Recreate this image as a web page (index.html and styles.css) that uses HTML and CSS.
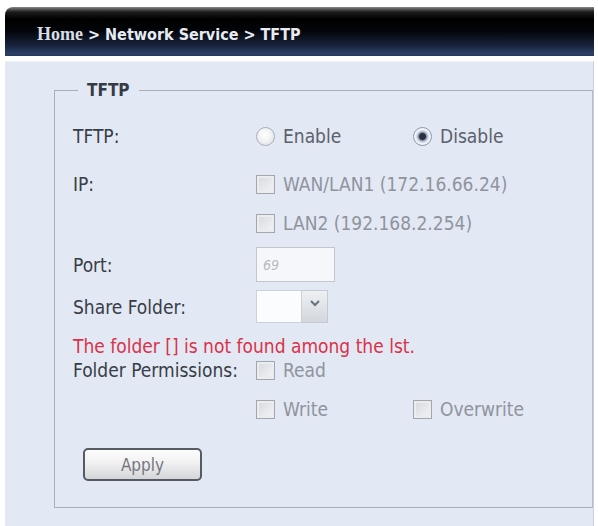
FILE: index.html
```html
<!DOCTYPE html>
<html>
<head>
<meta charset="utf-8">
<link rel="stylesheet" href="styles.css">
</head>
<body>
<div class="page">
  <div class="crumb"><span class="home">Home</span><span class="path">&nbsp;&gt; Network Service &gt; TFTP</span></div>
  <div class="panel">
    <fieldset class="box">
      <legend class="legend">TFTP</legend>
      <div class="row r-tftp">
        <span class="label">TFTP:</span>
        <span class="opt"><span class="radio"></span><span class="txt-mid">Enable</span></span>
        <span class="opt"><span class="radio on"></span><span class="txt-mid">Disable</span></span>
      </div>
      <div class="row r-ip">
        <span class="label">IP:</span>
        <span class="opt"><span class="check"></span><span class="txt-dis">WAN/LAN1 (172.16.66.24)</span></span>
      </div>
      <div class="row r-lan2">
        <span class="label"></span>
        <span class="opt"><span class="check"></span><span class="txt-dis">LAN2 (192.168.2.254)</span></span>
      </div>
      <div class="row r-port">
        <span class="label">Port:</span>
        <span class="field">69</span>
      </div>
      <div class="row r-share">
        <span class="label">Share Folder:</span>
        <span class="select"><span class="select-box"></span><span class="select-arrow"><svg width="10" height="7" viewBox="0 0 10 7"><path d="M1 1 L5 5 L9 1" fill="none" stroke="#6a717c" stroke-width="2"/></svg></span></span>
      </div>
      <div class="row r-err">
        <span class="error">The folder [] is not found among the lst.</span>
      </div>
      <div class="row r-perm">
        <span class="label">Folder Permissions:</span>
        <span class="opt"><span class="check"></span><span class="txt-dis">Read</span></span>
      </div>
      <div class="row r-write">
        <span class="label"></span>
        <span class="opt"><span class="check"></span><span class="txt-dis">Write</span></span>
        <span class="opt"><span class="check"></span><span class="txt-dis">Overwrite</span></span>
      </div>
      <div class="actions">
        <button class="btn" type="button">Apply</button>
      </div>
    </fieldset>
  </div>
</div>
</body>
</html>
```
FILE: styles.css
```css
html, body {
  margin: 0;
  padding: 0;
  background: #ffffff;
}
body {
  font-family: "DejaVu Sans Condensed", "DejaVu Sans", sans-serif;
  overflow: hidden;
}
.page {
  padding: 7px 4px 0 5px;
}
.crumb {
  height: 49px;
  box-sizing: border-box;
  border-radius: 8px 0 0 0;
  background: linear-gradient(#8a8a8a 0px, #5a5a5a 2px, #1c1c1c 5px, #000000 12px, #03050a 24px, #17223a 38px, #2e4169 47px, #24355a 49px);
  display: flex;
  align-items: center;
  padding: 5px 0 0 32px;
  color: #e6eaf0;
}
.home {
  font-family: "Liberation Serif", "DejaVu Serif", serif;
  font-weight: bold;
  font-size: 18px;
  color: #d9dee6;
}
.path {
  font-family: "DejaVu Sans Condensed", "DejaVu Sans", sans-serif;
  font-weight: bold;
  font-size: 16px;
  color: #e8ecf2;
}
.panel {
  margin-top: 5px;
  background: #e2e8f4;
  border-top: 1px solid #eef1f7;
  border-right: 1px solid #c9d0db;
  padding: 18px 0 30px 49px;
}
.box {
  margin: 0;
  border: 1px solid #a7afbb;
  border-right-color: #b6bdc8;
  padding: 24px 0 26px 18px;
  min-width: 0;
}
.legend {
  font-family: "DejaVu Sans Condensed", "DejaVu Sans", sans-serif;
  font-weight: bold;
  font-size: 17px;
  line-height: 20px;
  color: #363b43;
  padding: 0 9px;
  margin-left: 5px;
}
.row {
  display: flex;
  align-items: center;
  height: 24px;
  font-size: 19px;
  color: #383d45;
  white-space: nowrap;
}
.label {
  width: 183px;
  flex: none;
}
.opt {
  width: 157px;
  flex: none;
  display: flex;
  align-items: center;
  gap: 8px;
}
.r-ip { margin-top: 24px; }
.r-lan2 { margin-top: 15px; }
.r-port { margin-top: 12px; height: 35px; }
.r-share { margin-top: 8px; height: 33px; }
.r-err { margin-top: 11px; }
.r-perm { margin-top: 0; }
.r-write { margin-top: 15px; }
.txt-mid { color: #5c616a; }
.txt-dis { color: #8f949c; }
.radio {
  width: 19px;
  height: 19px;
  flex: none;
  box-sizing: border-box;
  border-radius: 50%;
  border: 1px solid #aab0b8;
  background: radial-gradient(circle at 45% 40%, #ffffff 0, #f1f2f4 45%, #d9dce1 100%);
}
.radio.on {
  border-color: #8e98a6;
  background: radial-gradient(circle, #2b323e 0, #2b323e 3px, #7f93ae 4px, #c9d4e2 5.5px, #eef1f5 7px, #f7f8fa 9px);
}
.check {
  width: 19px;
  height: 19px;
  flex: none;
  box-sizing: border-box;
  border: 1px solid #a2a7ae;
  background: linear-gradient(135deg, #d6d9dd, #f3f4f6);
  box-shadow: inset 0 0 0 2px #eaecef;
}
.field {
  width: 79px;
  height: 35px;
  box-sizing: border-box;
  border: 1px solid #c2c7ce;
  background: #f5f7fa;
  display: flex;
  align-items: center;
  padding-left: 6px;
  font-size: 14px;
  font-style: italic;
  color: #b6bac0;
}
.select {
  display: flex;
  width: 72px;
  height: 33px;
}
.select-box {
  flex: 1;
  background: #fbfcfd;
  border: 1px solid #cdd1d7;
}
.select-arrow {
  width: 26px;
  box-sizing: border-box;
  background: linear-gradient(#eef0f3, #d3d7dd);
  border: 1px solid #c6cad0;
  border-left: 0;
  display: flex;
  justify-content: center;
  align-items: flex-start;
  padding-top: 9px;
}
.error {
  color: #d9334a;
  font-size: 19px;
}
.actions {
  margin-top: 27px;
  padding-left: 10px;
  display: flex;
}
.btn {
  width: 119px;
  height: 33px;
  box-sizing: border-box;
  border: 2px solid #565a61;
  border-radius: 5px;
  background: linear-gradient(#fdfdfd, #f1f1f2 45%, #d4d5d8);
  font-family: "DejaVu Sans Condensed", "DejaVu Sans", sans-serif;
  font-size: 17px;
  color: #73777d;
  padding: 0;
}
```
